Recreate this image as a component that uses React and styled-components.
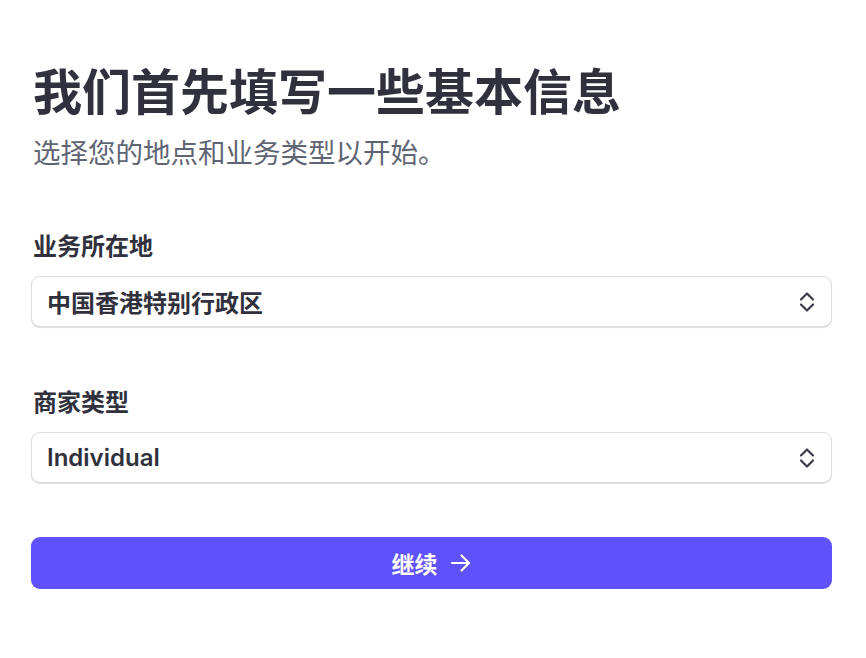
import React from "react";
import styled, { createGlobalStyle } from "styled-components";

const GlobalStyle = createGlobalStyle`
  html, body {
    margin: 0;
    padding: 0;
    background: #ffffff;
  }
  body {
    font-family: Inter, "Noto Sans CJK SC", sans-serif;
    -webkit-font-smoothing: antialiased;
  }
`;

const Page = styled.main`
  box-sizing: border-box;
  width: 866px;
  padding: 65px 34px 0 31px;
  display: flex;
  flex-direction: column;
`;

const Title = styled.h1`
  margin: 0 0 0 2px;
  font-family: Inter, "Noto Sans CJK SC", sans-serif;
  font-size: 49px;
  line-height: 56px;
  font-weight: 700;
  color: #30313d;
`;

const Subtitle = styled.p`
  margin: 14px 0 0 2px;
  font-family: Inter, "Noto Sans CJK SC", sans-serif;
  font-size: 27.5px;
  line-height: 36px;
  font-weight: 400;
  color: #5f6573;
`;

const Form = styled.form`
  display: flex;
  flex-direction: column;
  margin-top: 61px;
`;

const Field = styled.div`
  display: flex;
  flex-direction: column;
  gap: 14px;
  margin-bottom: ${(p) => p.$spacing}px;
`;

const Label = styled.label`
  margin-left: 2px;
  font-family: Inter, "Noto Sans CJK SC", sans-serif;
  font-size: 24px;
  line-height: 30px;
  font-weight: 600;
  color: #30313d;
`;

const SelectBox = styled.div`
  box-sizing: border-box;
  height: 51px;
  display: flex;
  align-items: center;
  justify-content: space-between;
  padding: 0 16px 0 15px;
  border: 1px solid #dcdce2;
  border-radius: 9px;
  box-shadow: 0 1px 1px rgba(0, 0, 0, 0.14);
  background: #ffffff;
`;

const SelectValue = styled.span`
  font-family: Inter, "Noto Sans CJK SC", sans-serif;
  font-size: 24px;
  font-weight: 600;
  color: #30313d;
`;

const Button = styled.button`
  box-sizing: border-box;
  height: 52px;
  border: none;
  border-radius: 9px;
  background: #5f52fb;
  color: #ffffff;
  display: flex;
  align-items: center;
  justify-content: center;
  gap: 12px;
  font-family: Inter, "Noto Sans CJK SC", sans-serif;
  font-size: 23px;
  font-weight: 600;
  cursor: pointer;
`;

const Chevrons = () => (
  <svg width="16" height="22" viewBox="0 0 16 22" fill="none">
    <path d="M2 8.5 L8 2.5 L14 8.5" stroke="#3c3d48" strokeWidth="2.2" strokeLinecap="round" strokeLinejoin="round" />
    <path d="M2 13.5 L8 19.5 L14 13.5" stroke="#3c3d48" strokeWidth="2.2" strokeLinecap="round" strokeLinejoin="round" />
  </svg>
);

const Arrow = () => (
  <svg width="22" height="20" viewBox="0 0 22 20" fill="none">
    <path d="M2 10 H19 M11.5 2.5 L19 10 L11.5 17.5" stroke="#ffffff" strokeWidth="2.2" strokeLinecap="round" strokeLinejoin="round" />
  </svg>
);

const Select = ({ value }) => (
  <SelectBox>
    <SelectValue>{value}</SelectValue>
    <Chevrons />
  </SelectBox>
);

export default function App() {
  return (
    <>
      <GlobalStyle />
      <Page>
        <Title>我们首先填写一些基本信息</Title>
        <Subtitle>选择您的地点和业务类型以开始。</Subtitle>
        <Form onSubmit={(e) => e.preventDefault()}>
          <Field $spacing={61}>
            <Label>业务所在地</Label>
            <Select value="中国香港特别行政区" />
          </Field>
          <Field $spacing={54}>
            <Label>商家类型</Label>
            <Select value="Individual" />
          </Field>
          <Button type="submit">
            继续
            <Arrow />
          </Button>
        </Form>
      </Page>
    </>
  );
}
